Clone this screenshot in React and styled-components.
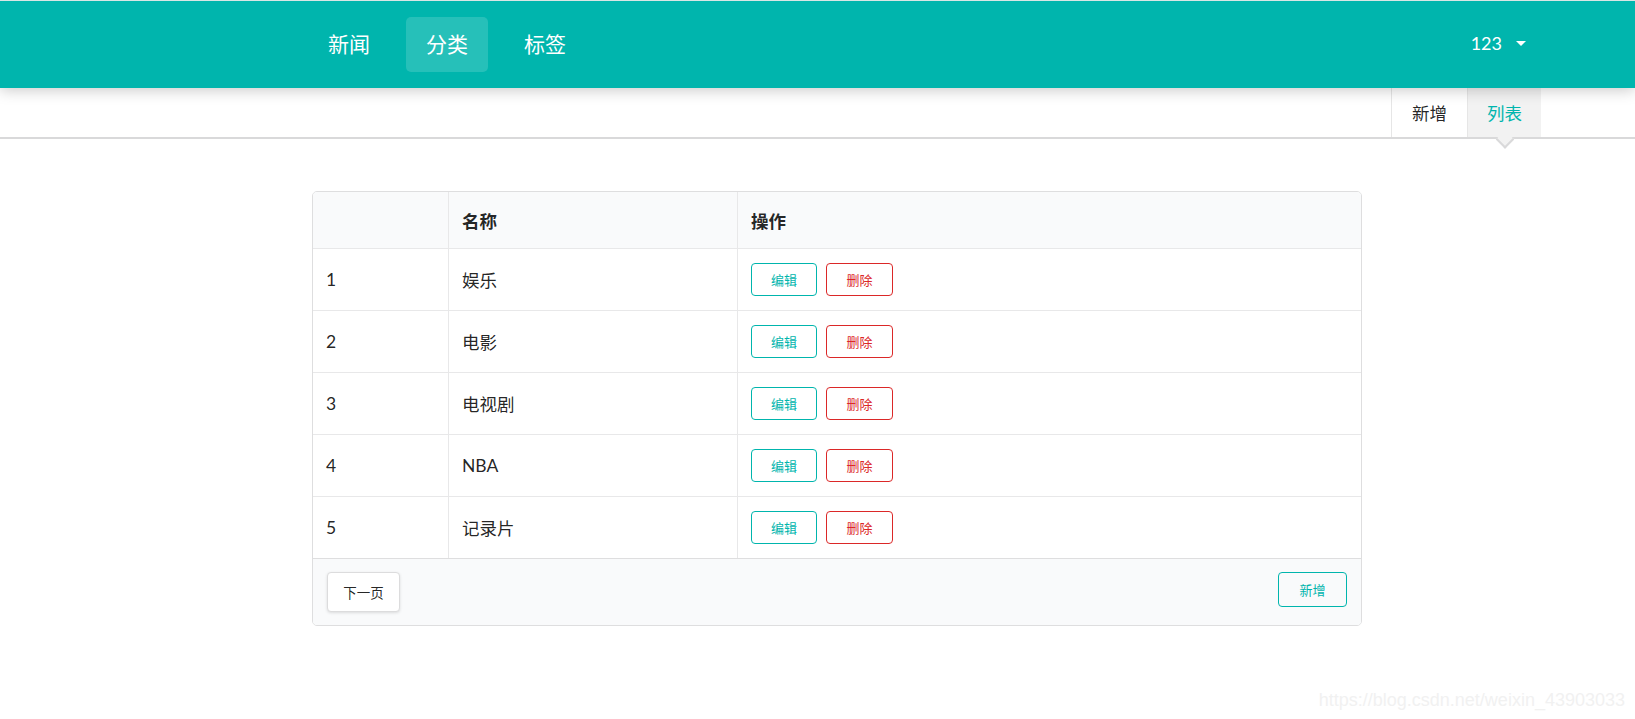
import React from 'react';
import styled, {createGlobalStyle} from 'styled-components';

const GlobalStyle = createGlobalStyle`
  html, body {
    margin: 0;
    padding: 0;
    background: #ffffff;
    font-family: Lato, "Noto Sans CJK SC", "Noto Sans", sans-serif;
    color: rgba(0, 0, 0, 0.87);
  }
`

const TEAL = '#00b5ad';
const RED = '#db2828';

const Page = styled.div`
  min-height: 719px;
  position: relative;
`

const TopBar = styled.header`
  height: 87px;
  border-top: 1px solid #d9e6e5;
  background: ${TEAL};
  box-shadow: 0 2px 14px rgba(0, 0, 0, 0.22);
  position: relative;
  z-index: 2;
`

const TopInner = styled.div`
  height: 100%;
  margin-left: 308px;
  width: 1233px;
  display: flex;
  align-items: center;
  gap: 16px;
`

const NavItem = styled.a`
  height: 55px;
  padding: 0 20px 4px;
  box-sizing: border-box;
  display: flex;
  align-items: center;
  border-radius: 5px;
  font-size: 21px;
  color: #ffffff;
  background: ${p => p.$active ? 'rgba(255, 255, 255, 0.15)' : 'transparent'};
  cursor: pointer;
`

const UserItem = styled.div`
  margin-left: auto;
  display: flex;
  align-items: center;
  gap: 14px;
  padding: 0 15px 4px 0;
  font-size: 18px;
  color: #ffffff;
`

const Caret = styled.span`
  width: 0;
  height: 0;
  border-left: 5px solid transparent;
  border-right: 5px solid transparent;
  border-top: 5px solid #ffffff;
  margin-top: 2px;
`

const SubBar = styled.div`
  height: 49px;
  border-bottom: 2px solid #d9d9da;
  display: flex;
  justify-content: flex-end;
  padding-right: 94px;
`

const Tab = styled.a`
  position: relative;
  display: flex;
  align-items: center;
  padding: 0 ${p => p.$active ? 19 : 20}px;
  font-size: 17.5px;
  border-left: 1px solid #e6e6e6;
  color: ${p => p.$active ? TEAL : 'rgba(0, 0, 0, 0.87)'};
  background: ${p => p.$active ? '#f2f2f2' : '#ffffff'};
  cursor: pointer;

  ${p => p.$active && `
    &::after {
      content: '';
      position: absolute;
      left: 50%;
      top: 100%;
      width: 11px;
      height: 11px;
      background: #f2f2f2;
      border-right: 2px solid #d9d9da;
      border-bottom: 2px solid #d9d9da;
      transform: translate(-50%, -4px) rotate(45deg);
    }
  `}
`

const Content = styled.main`
  padding: 52px 0 0 312px;
`

const Table = styled.table`
  width: 1050px;
  border-collapse: separate;
  border-spacing: 0;
  border: 1px solid #dededf;
  border-radius: 5px;
  font-size: 17.5px;
  overflow: hidden;
`

const Th = styled.th`
  height: 56px;
  padding: 0 13px;
  text-align: left;
  font-weight: 700;
  background: #f9fafb;
  border-left: ${p => p.$first ? 'none' : '1px solid #e8e8e9'};
  width: ${p => p.$w || 'auto'};
  box-sizing: border-box;
`

const Td = styled.td`
  height: 61px;
  padding: 0 13px;
  border-top: 1px solid #e8e8e9;
  border-left: ${p => p.$first ? 'none' : '1px solid #e8e8e9'};
`

const Actions = styled.div`
  display: flex;
  gap: 9px;
`

const OutlineButton = styled.button`
  height: ${p => p.$h || 33}px;
  width: ${p => p.$w || 66}px;
  padding: 0;
  border: 1px solid ${p => p.$color};
  border-radius: 4px;
  background: transparent;
  color: ${p => p.$color};
  font-family: inherit;
  font-size: 13px;
  cursor: pointer;
`

const FooterCell = styled.td`
  height: 67px;
  padding: 13px 14px 0;
  vertical-align: top;
  box-sizing: border-box;
  background: #f9fafb;
  border-top: 1px solid #dededf;
`

const FooterRow = styled.div`
  display: flex;
  justify-content: space-between;
  align-items: flex-start;
`

const PlainButton = styled.button`
  height: 40px;
  width: 73px;
  border: 1px solid #dcdcdd;
  border-radius: 4px;
  background: #ffffff;
  box-shadow: 0 1px 3px rgba(0, 0, 0, 0.12);
  font-family: inherit;
  font-size: 13.5px;
  color: rgba(0, 0, 0, 0.87);
  cursor: pointer;
`

const Watermark = styled.div`
  position: absolute;
  right: 10px;
  bottom: 8px;
  font-family: "Liberation Sans", Arial, sans-serif;
  font-size: 18px;
  color: #f1f1f1;
`

const rows = [
  {id: 1, name: '娱乐'},
  {id: 2, name: '电影'},
  {id: 3, name: '电视剧'},
  {id: 4, name: 'NBA'},
  {id: 5, name: '记录片'},
];

export default function App() {
  return (
    <Page>
      <GlobalStyle />
      <TopBar>
        <TopInner>
          <NavItem>新闻</NavItem>
          <NavItem $active>分类</NavItem>
          <NavItem>标签</NavItem>
          <UserItem>
            123
            <Caret />
          </UserItem>
        </TopInner>
      </TopBar>
      <SubBar>
        <Tab>新增</Tab>
        <Tab $active>列表</Tab>
      </SubBar>
      <Content>
        <Table>
          <thead>
            <tr>
              <Th $first $w="135px"></Th>
              <Th $w="289px">名称</Th>
              <Th>操作</Th>
            </tr>
          </thead>
          <tbody>
            {rows.map(row => (
              <tr key={row.id}>
                <Td $first>{row.id}</Td>
                <Td>{row.name}</Td>
                <Td>
                  <Actions>
                    <OutlineButton $color={TEAL}>编辑</OutlineButton>
                    <OutlineButton $color={RED} $w={67}>删除</OutlineButton>
                  </Actions>
                </Td>
              </tr>
            ))}
          </tbody>
          <tfoot>
            <tr>
              <FooterCell colSpan={3}>
                <FooterRow>
                  <PlainButton>下一页</PlainButton>
                  <OutlineButton $color={TEAL} $w={69} $h={35}>新增</OutlineButton>
                </FooterRow>
              </FooterCell>
            </tr>
          </tfoot>
        </Table>
      </Content>
      <Watermark>https://blog.csdn.net/weixin_43903033</Watermark>
    </Page>
  );
}
